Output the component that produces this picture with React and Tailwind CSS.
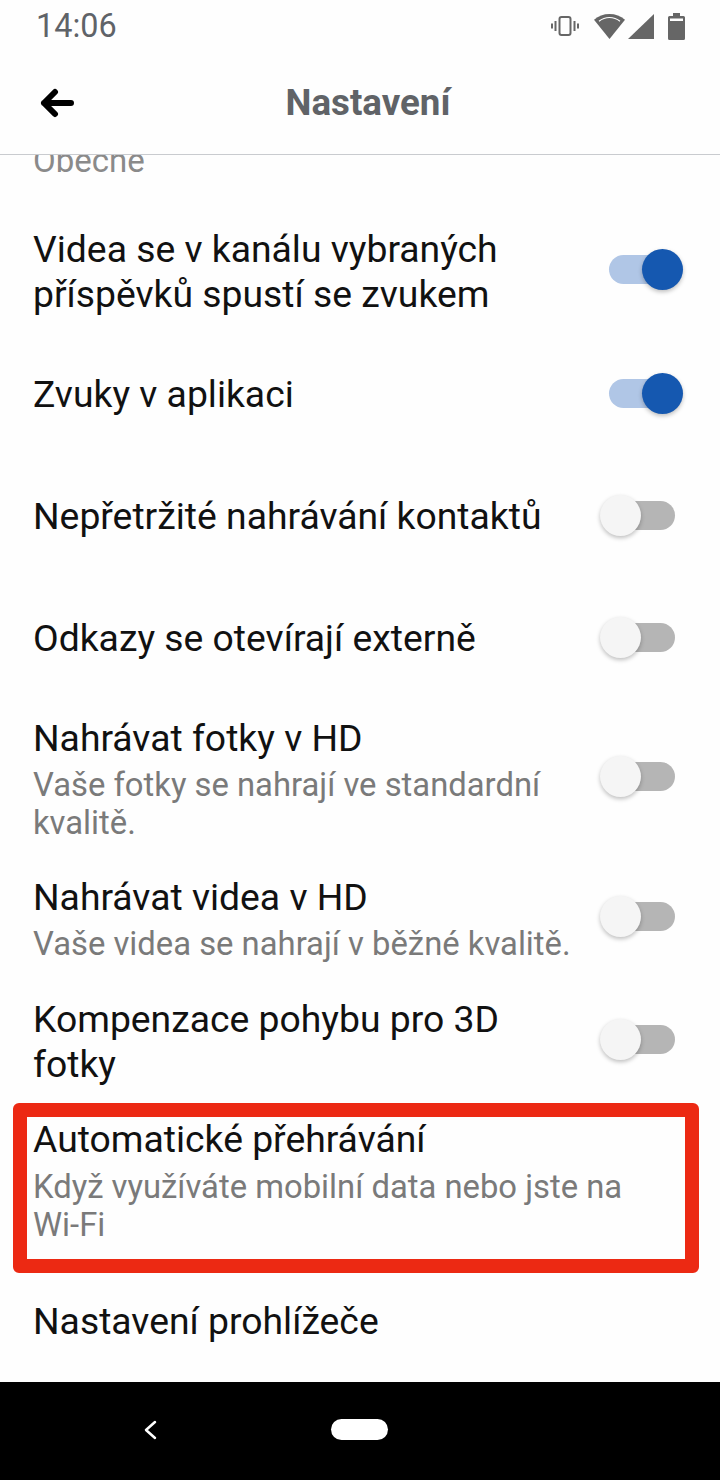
const settings = [
  { title: "Videa se v kanálu vybraných příspěvků spustí se zvukem", on: true, height: "h-[124px] pt-[2px]", lifted: true },
  { title: "Zvuky v aplikaci", on: true, height: "h-[122px]" },
  { title: "Nepřetržité nahrávání kontaktů", on: false, height: "h-[122px]" },
  { title: "Odkazy se otevírají externě", on: false, height: "h-[122px]" },
  { title: "Nahrávat fotky v HD", sub: "Vaše fotky se nahrají ve standardní kvalitě.", on: false, height: "h-[160px]", lifted: true },
  { title: "Nahrávat videa v HD", sub: "Vaše videa se nahrají v běžné kvalitě.", on: false, height: "h-[120px]", lifted: true },
  { title: "Kompenzace pohybu pro 3D fotky", on: false, height: "h-[122px] pt-[4px]", lifted: true },
];

function Toggle({ on, lifted }) {
  return (
    <div className={`relative flex h-[41px] w-[83px] shrink-0 items-center pl-[9px] ${lifted ? "mb-[6px]" : "mb-[2px]"}`}>
      <div className={`h-[29px] w-[66px] rounded-full ${on ? "bg-[#b0c6e6]" : "bg-[#b5b5b5]"}`} />
      <div
        className={`absolute top-0 h-[41px] w-[41px] rounded-full shadow-[0_2px_4px_rgba(0,0,0,0.25)] ${
          on ? "right-0 bg-[#1558b0]" : "left-0 bg-[#f5f5f5]"
        }`}
      />
    </div>
  );
}

function SettingRow({ title, sub, on, height, lifted }) {
  return (
    <div className={`flex items-center justify-between pl-[33px] pr-[37px] ${height}`}>
      <div className="w-[541px]">
        <div className="text-[37.300px] leading-[45px] text-[#111]">{title}</div>
        {sub && <div className="mt-[5px] text-[32.800px] leading-[38px] text-[#7a7a7a]">{sub}</div>}
      </div>
      <Toggle on={on} lifted={lifted} />
    </div>
  );
}

function StatusIcons() {
  return (
    <div className="flex items-center">
      {/* vibrate */}
      <svg width="28" height="20" viewBox="0 0 28 20" fill="none" stroke="#666" strokeWidth="2" className="mr-[15px]">
        <rect x="8.500" y="1" width="11" height="18" rx="2" />
        <path d="M4.500 5v10M1 7.500v5M23.500 5v10M27 7.500v5" />
      </svg>
      {/* wifi */}
      <svg width="31" height="25" viewBox="0 0 31 25" className="mr-[3px]">
        <path d="M15.500 0C9.500 0 4.500 2 0 5.800L15.500 25 31 5.800C26.500 2 21.500 0 15.500 0Z" fill="#666" />
        <path d="M5 7.200C8 4.800 11.500 3.500 15.500 3.500S23 4.800 26 7.200" fill="none" stroke="#fff" strokeWidth="1.200" />
      </svg>
      {/* signal */}
      <svg width="26" height="25" viewBox="0 0 26 25" className="mr-[14px]">
        <path d="M26 0V25H0Z" fill="#666" />
      </svg>
      {/* battery */}
      <svg width="17" height="27" viewBox="0 0 17 27">
        <path d="M5 0h7v3h3.500a1.500 1.500 0 0 1 1.500 1.500V25.500a1.500 1.500 0 0 1-1.500 1.500H1.500A1.500 1.500 0 0 1 0 25.500V4.500A1.500 1.500 0 0 1 1.500 3H5Z" fill="#666" />
        <rect x="2" y="5.500" width="13" height="2.500" fill="#fff" />
      </svg>
    </div>
  );
}

export default function App() {
  return (
    <div className="flex h-[1480px] w-[720px] flex-col overflow-hidden bg-[#fefefe] font-['Roboto',sans-serif]">
      {/* status bar */}
      <div className="flex h-[50px] shrink-0 items-center justify-between pl-[36px] pr-[35px] pt-[2px]">
        <span className="text-[32.400px] leading-none text-[#5f6368]">14:06</span>
        <StatusIcons />
      </div>

      {/* header */}
      <div className="relative flex h-[105px] shrink-0 items-center justify-center border-b border-[#c9cbcf] pl-[16px] pt-[3px]">
        <svg width="36" height="30" viewBox="0 0 36 30" fill="none" stroke="#000" strokeWidth="6" strokeLinecap="round" strokeLinejoin="round" className="absolute left-[38px] top-[38px]">
          <path d="M33 15H6M17 4 6 15l11 11" />
        </svg>
        <span className="text-[36.700px] font-bold leading-none text-[#606367]">Nastavení</span>
      </div>

      {/* settings list */}
      <div className="h-[1227px] shrink-0 overflow-hidden">
        <div className="-mt-[12px] h-[66px] pl-[33px] text-[33px] leading-[36px] text-[#8a8a8a]">Obecne</div>
        {settings.map((s) => (
          <SettingRow key={s.title} {...s} />
        ))}

        <div className="relative h-[162px] pl-[33px] pt-[16px]">
          <div className="text-[37.300px] leading-[45px] text-[#111]">Automatické přehrávání</div>
          <div className="mt-[6px] w-[600px] text-[32.800px] leading-[38px] text-[#7a7a7a]">
            Když využíváte mobilní data nebo jste na <span className="whitespace-nowrap">Wi-Fi</span>
          </div>
          {/* red highlight frame */}
          <div className="absolute left-[13px] top-[2px] h-[170px] w-[686px] rounded-[6px] border-[14px] border-[#ec2913]" />
        </div>

        <div className="flex h-[116px] items-center pl-[33px] text-[37.300px] leading-[45px] text-[#111]">
          Nastavení prohlížeče
        </div>
      </div>

      {/* navigation bar */}
      <div className="flex h-[98px] shrink-0 items-center bg-black pb-[3px] pl-[143px]">
        <svg width="14" height="20" viewBox="0 0 14 20" fill="none" stroke="#fff" strokeWidth="2.500" strokeLinecap="round" strokeLinejoin="round">
          <path d="M12 2 3 10l9 8" />
        </svg>
        <div className="ml-[174px] h-[21px] w-[57px] rounded-full bg-white" />
      </div>
    </div>
  );
}
